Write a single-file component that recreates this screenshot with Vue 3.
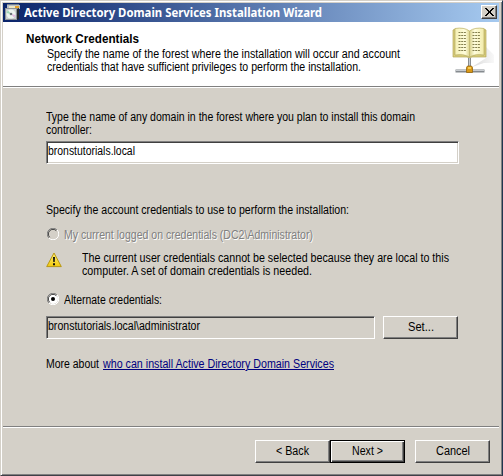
<script setup>
// Condenses a line horizontally to the width of the classic dialog font.
const vFit = {
  mounted(el, { value }) {
    const range = document.createRange()
    range.selectNodeContents(el)
    const natural = range.getBoundingClientRect().width
    el.style.width = `${value}px`
    el.style.transform = `scaleX(${value / natural})`
  },
}

const intro = [
  { text: 'Specify the name of the forest where the installation will occur and account', width: 353 },
  { text: 'credentials that have sufficient privileges to perform the installation.', width: 314 },
]
const prompt = [
  { text: 'Type the name of any domain in the forest where you plan to install this domain', width: 369 },
  { text: 'controller:', width: 46 },
]
const warning = [
  { text: 'The current user credentials cannot be selected because they are local to this', width: 367 },
  { text: 'computer. A set of domain credentials is needed.', width: 230 },
]
const bookLines = [32.5, 35.5, 38.5, 41.5, 44.5, 47.5, 50.5]
</script>

<template>
  <div class="window">
    <div class="titlebar">
      <svg class="app-icon" width="16" height="17" viewBox="0 0 16 17">
        <path d="M2 1h13v4H2z" fill="#b9bfc6" />
        <path d="M2 0h12v1H2z" fill="#77808a" />
        <path d="M4 2h9v3H4z" fill="#efe6c0" />
        <path d="M10 2h4v2h-4z" fill="#e6a32c" />
        <path d="M11 5l3-1v11l-3 1z" fill="#24272c" />
        <path d="M0 4h12v12H0z" fill="#8d9298" />
        <path d="M1 5h10v10H1z" fill="#cbd0d0" />
        <circle cx="6" cy="10" r="4.5" fill="#eef4ef" />
        <path d="M6 10L3 6.500a4.500 4.500 0 0 0-1.400 2.500z" fill="#9fd8b5" />
        <path d="M6 10l3 3.500a4.500 4.500 0 0 0 1.400-2.500z" fill="#e3b7df" />
        <circle cx="6" cy="10" r="1.300" fill="#6f767b" />
      </svg>
      <span class="caption"><span v-fit="298">Active Directory Domain Services Installation Wizard</span></span>
      <button class="close" aria-label="Close">
        <svg width="9" height="8" viewBox="0 0 9 8" shape-rendering="crispEdges">
          <path d="M0 0h2v1h1v1h1v1h1v-1h1v-1h1v-1h2v1h-1v1h-1v1h-1v2h1v1h1v1h1v1h-2v-1h-1v-1h-1v-1h-1v1h-1v1h-1v1h-2v-1h1v-1h1v-1h1v-2h-1v-1h-1v-1h-1z" fill="#000" />
        </svg>
      </button>
    </div>

    <header class="header">
      <div class="heading">
        <div class="line bold"><span v-fit="113">Network Credentials</span></div>
        <div class="intro">
          <div v-for="l in intro" :key="l.text" class="line"><span v-fit="l.width">{{ l.text }}</span></div>
        </div>
      </div>
      <svg class="book" width="46" height="52" viewBox="450 25 46 52">
        <defs>
          <linearGradient id="pageLeft">
            <stop offset="0" stop-color="#f5f0b4" /><stop offset=".7" stop-color="#fffddd" /><stop offset="1" stop-color="#dcd48c" />
          </linearGradient>
          <linearGradient id="pageRight">
            <stop offset="0" stop-color="#d8d08a" /><stop offset=".35" stop-color="#fffddd" /><stop offset="1" stop-color="#f2ebaa" />
          </linearGradient>
          <linearGradient id="shade">
            <stop offset="0" stop-color="#d9d9d9" /><stop offset="1" stop-color="#f8f8f8" />
          </linearGradient>
        </defs>
        <path d="M472 67l14-9V47l8 8v8l-10 0z" fill="url(#shade)" />
        <path d="M453 30l2-1v26l8-.5 6.500 2.500 6.500-2.500 8 .5V29l2 1v27h-14l-2.500 1-2.500-1h-14z" fill="#d9ce7c" stroke="#b5a85a" stroke-width=".7" />
        <path d="M455 28.500q9-1.500 14.500 2.500v26q-6-3.500-14.500-2z" fill="url(#pageLeft)" stroke="#c2b86f" stroke-width=".8" />
        <path d="M484 28.500q-9-1.500-14.500 2.500v26q6-3.500 14.500-2z" fill="url(#pageRight)" stroke="#c2b86f" stroke-width=".8" />
        <g stroke="#777341" stroke-width=".9" stroke-dasharray="2 .7">
          <path v-for="y in bookLines" :key="y" :d="`M458.500 ${y}h8M472.500 ${y}h8`" />
        </g>
        <path d="M468 58h3v9h-3z" fill="#888d91" />
        <path d="M469 58h1v9h-1z" fill="#c5cbd0" />
        <path d="M455.500 69.500h29v3h-29z" fill="#858a8f" />
        <path d="M456 70h28v1h-28z" fill="#c8ccd0" />
        <path d="M466.500 67.500l1-1.500h4l1 1.500v5h-6z" fill="#d99816" stroke="#96650c" stroke-width=".8" />
        <path d="M468 67h3v2h-3z" fill="#f7ca50" />
      </svg>
    </header>

    <main class="body">
      <div v-for="l in prompt" :key="l.text" class="line"><span v-fit="l.width">{{ l.text }}</span></div>
      <div class="field domain"><span v-fit="87">bronstutorials.local</span></div>

      <div class="line account"><span v-fit="303">Specify the account credentials to use to perform the installation:</span></div>

      <div class="option disabled">
        <svg class="radio" width="12" height="12" viewBox="0 0 12 12">
          <circle cx="6" cy="6" r="5" fill="#d4d0c8" />
          <path d="M1.900 10.100A5.500 5.500 0 0 1 10.100 1.900" fill="none" stroke="#808080" />
          <path d="M2.700 9.300A4.500 4.500 0 0 1 9.300 2.700" fill="none" stroke="#404040" />
          <path d="M10.100 1.900A5.500 5.500 0 0 1 1.900 10.100" fill="none" stroke="#fff" />
        </svg>
        <div class="line"><span v-fit="249">My current logged on credentials (DC2\Administrator)</span></div>
      </div>

      <div class="warning">
        <svg class="warn-icon" width="16" height="16" viewBox="0 0 16 16">
          <defs>
            <linearGradient id="yellow" x2="0" y2="1">
              <stop offset="0" stop-color="#fff27a" /><stop offset="1" stop-color="#f2c80c" />
            </linearGradient>
          </defs>
          <path d="M8 1L15.300 14.600H.7z" fill="url(#yellow)" stroke="#b79714" stroke-linejoin="round" />
          <path d="M7 5h2l-.3 5H7.300zM7 11.200h2v2H7z" fill="#111" />
        </svg>
        <div>
          <div v-for="l in warning" :key="l.text" class="line"><span v-fit="l.width">{{ l.text }}</span></div>
        </div>
      </div>

      <div class="option alternate">
        <svg class="radio" width="12" height="12" viewBox="0 0 12 12">
          <circle cx="6" cy="6" r="5" fill="#fff" />
          <path d="M1.900 10.100A5.500 5.500 0 0 1 10.100 1.900" fill="none" stroke="#808080" />
          <path d="M2.700 9.300A4.500 4.500 0 0 1 9.300 2.700" fill="none" stroke="#404040" />
          <path d="M10.100 1.900A5.500 5.500 0 0 1 1.900 10.100" fill="none" stroke="#fff" />
          <circle cx="6" cy="6" r="2" fill="#000" />
        </svg>
        <div class="line"><span v-fit="98">Alternate credentials:</span></div>
      </div>

      <div class="user-row">
        <div class="field readonly"><span v-fit="152">bronstutorials.local\administrator</span></div>
        <button class="button"><span v-fit="26">Set...</span></button>
      </div>

      <div class="line more">
        <span v-fit="53" class="more-label">More about</span><a class="link"><span v-fit="231">who can install Active Directory Domain Services</span></a>
      </div>
    </main>

    <footer class="footer">
      <button class="button"><span v-fit="33">&lt; Back</span></button>
      <button class="button default"><span v-fit="31">Next &gt;</span></button>
      <button class="button cancel"><span v-fit="34">Cancel</span></button>
    </footer>
  </div>
</template>

<style>
body {
  background: #d4d0c8;
  overflow: hidden;
}
</style>

<style scoped>
.window {
  box-sizing: border-box;
  width: 503px;
  height: 476px;
  display: flex;
  flex-direction: column;
  padding: 1px 1px 0 1px;
  border: 1px solid #d4d0c8;
  border-right-color: #203650;
  border-bottom-color: #404047;
  box-shadow: inset 1px 1px #fff, inset -1px -1px #808080;
  background: #d4d0c8;
  color: #000;
  font: 12px/13px "Liberation Sans", Arial, sans-serif;
}
.window span[style] {
  display: inline-block;
  transform-origin: 0 0;
  white-space: nowrap;
  text-align: left;
}
.titlebar {
  flex: none;
  box-sizing: border-box;
  height: 19px;
  margin: 1px 2px 0 1px;
  padding-left: 2px;
  display: flex;
  align-items: flex-start;
  background: linear-gradient(90deg, #0a246a, #a6caf0);
}
.app-icon {
  flex: none;
  margin-top: 1px;
}
.caption {
  margin: 1px auto 0 3px;
  color: #fff;
  font: bold 12px/17px "Noto Sans", "DejaVu Sans", sans-serif;
  white-space: nowrap;
}
.close {
  box-sizing: border-box;
  width: 16px;
  height: 14px;
  margin: 2px 2px 0 0;
  padding: 0;
  display: flex;
  align-items: center;
  justify-content: center;
  border: 1px solid;
  border-color: #fff #404040 #404040 #fff;
  box-shadow: inset -1px -1px #808080;
  background: #d4d0c8;
}
.header {
  flex: none;
  box-sizing: border-box;
  height: 65px;
  margin: 0 2px 0 1px;
  padding: 10px 3px 0 23px;
  display: flex;
  justify-content: space-between;
  background: #fff;
  border-bottom: 1px solid #808080;
  box-shadow: 0 1px #fff;
}
.line {
  height: 13px;
  line-height: 15px;
  white-space: nowrap;
}
.bold {
  font-weight: bold;
}
.intro {
  margin: 2px 0 0 21px;
}
.book {
  flex: none;
  margin-top: -7px;
}
.body {
  flex: 1;
  padding: 23px 0 0 44px;
}
.field {
  box-sizing: border-box;
  height: 23px;
  padding: 3px 0 0 1px;
  border: 1px solid;
  border-color: #808080 #fff #fff #808080;
  box-shadow: inset 1px 1px #404040, inset -1px -1px #d4d0c8;
  background: #fff;
  white-space: nowrap;
}
.domain {
  width: 413px;
  margin-top: 5px;
}
.account {
  margin-top: 39px;
}
.option {
  display: flex;
  margin-top: 12px;
}
.radio {
  flex: none;
  margin: 0 5px 0 1px;
}
.disabled {
  color: #808080;
  text-shadow: 1px 1px #fff;
}
.warning {
  display: flex;
  gap: 20px;
  margin-top: 10px;
}
.warn-icon {
  flex: none;
  margin-top: 1px;
}
.alternate {
  margin-top: 16px;
}
.user-row {
  display: flex;
  gap: 8px;
  margin-top: 10px;
}
.readonly {
  width: 329px;
  background: #d4d0c8;
}
.button {
  box-sizing: border-box;
  width: 75px;
  height: 23px;
  padding: 0;
  border: 1px solid;
  border-color: #fff #404040 #404040 #fff;
  border-radius: 0;
  box-shadow: inset -1px -1px #808080;
  background: #d4d0c8;
  color: #000;
  font: inherit;
  white-space: nowrap;
}
.default {
  border-color: #000;
  box-shadow: inset 1px 1px #fff, inset -1px -1px #404040, inset -2px -2px #808080;
}
.more {
  margin-top: 18px;
}
.more-label {
  margin-right: 4px;
}
.link {
  color: #00007f;
}
.link span {
  text-decoration: underline;
  text-decoration-thickness: 1px;
  text-underline-offset: 1px;
}
.footer {
  flex: none;
  box-sizing: border-box;
  height: 49px;
  margin: 0 2px 0 1px;
  padding: 13px 9px 0 0;
  display: flex;
  justify-content: flex-end;
  border-top: 1px solid #808080;
  box-shadow: inset 0 1px #fff;
}
.cancel {
  margin-left: 10px;
}
</style>
